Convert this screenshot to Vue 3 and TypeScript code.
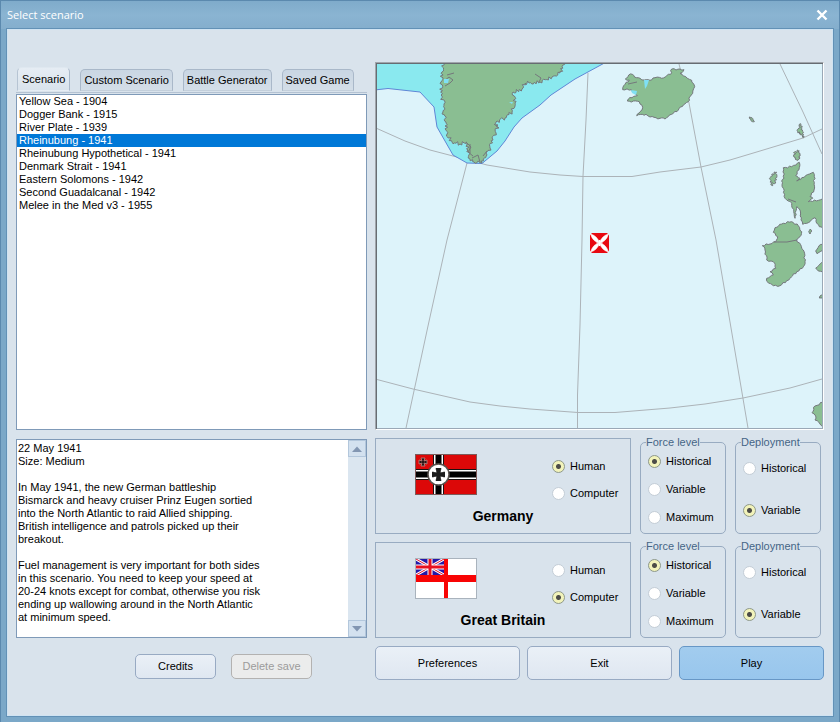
<script setup lang="ts">
import { reactive, ref } from 'vue'

type Point = [number, number]

interface Side {
  id: string
  name: string
  player: string
  force: string
  deployment: string
}

const tabs = ['Scenario', 'Custom Scenario', 'Battle Generator', 'Saved Game']
const activeTab = ref('Scenario')

const scenarios = [
  'Yellow Sea - 1904',
  'Dogger Bank - 1915',
  'River Plate - 1939',
  'Rheinubung - 1941',
  'Rheinubung Hypothetical - 1941',
  'Denmark Strait - 1941',
  'Eastern Solomons - 1942',
  'Second Guadalcanal - 1942',
  'Melee in the Med v3 - 1955',
]
const selected = ref('Rheinubung - 1941')

const briefing = [
  '22 May 1941',
  'Size: Medium',
  '',
  'In May 1941, the new German battleship',
  'Bismarck and heavy cruiser Prinz Eugen sortied',
  'into the North Atlantic to raid Allied shipping.',
  'British intelligence and patrols picked up their',
  'breakout.',
  '',
  'Fuel management is very important for both sides',
  'in this scenario. You need to keep your speed at',
  '20-24 knots except for combat, otherwise you risk',
  'ending up wallowing around in the North Atlantic',
  'at minimum speed.',
].join('\n')

const players = ['Human', 'Computer']
const forceLevels = ['Historical', 'Variable', 'Maximum']
const deployments = ['Historical', 'Variable']

const sides = reactive<Side[]>([
  { id: 'germany', name: 'Germany', player: 'Human', force: 'Historical', deployment: 'Variable' },
  { id: 'britain', name: 'Great Britain', player: 'Computer', force: 'Historical', deployment: 'Variable' },
])

const memo = ref<HTMLTextAreaElement | null>(null)
const scrollMemo = (lines: number) => memo.value?.scrollBy(0, lines * 13)

/* Chart points are kept in thirds of a chart unit, relative to an origin. */
const place = (ox: number, oy: number, pts: Point[]): Point[] =>
  pts.map(([x, y]): Point => [ox + x / 3, oy + y / 3])

/* Breaks every stretch of shore into short steps that swing to either side. */
function coast(pts: Point[], jag: number, step = 2): string {
  const out: string[] = []
  let n = 0
  pts.forEach(([x1, y1], i) => {
    const [x2, y2] = pts[(i + 1) % pts.length]
    const len = Math.hypot(x2 - x1, y2 - y1) || 1
    const parts = Math.max(1, Math.round(len / step))
    for (let k = 0; k < parts; k++) {
      n++
      const swing = k === 0 ? 0 : jag * Math.sin(n * 2.3 + Math.sin(n * 5.1) * 2)
      const x = x1 + ((x2 - x1) * k) / parts - ((y2 - y1) / len) * swing
      const y = y1 + ((y2 - y1) * k) / parts + ((x2 - x1) / len) * swing
      out.push(`${x.toFixed(1)} ${y.toFixed(1)}`)
    }
  })
  return `M${out.join('L')}Z`
}

const greenland = coast(
  [[445, 58], [442, 72], [441, 82], [441, 95], [444, 104], [443, 112], [446, 122], [447, 134], [452, 142], [460, 144],
   [467, 142], [468, 150], [470, 159], [474, 162], [482, 163], [487, 155], [490, 148], [493, 140], [496, 133], [498, 125],
   [496, 122], [505, 118], [512, 112], [515, 103], [513, 92], [522, 89], [525, 83], [540, 82], [552, 77], [560, 73], [566, 62], [566, 58]],
  1.7, 1.4,
)
const iceland = coast(place(600, 55, [
  [97, 58], [110, 68], [120, 70], [133, 75], [150, 76], [165, 68], [185, 70], [200, 62], [212, 58], [215, 42], [228, 45],
  [240, 42], [252, 44], [240, 55], [262, 70], [275, 76], [284, 95], [278, 115], [270, 125], [265, 140], [250, 150],
  [235, 165], [215, 178], [195, 192], [180, 190], [150, 186], [138, 178], [110, 182], [120, 170], [128, 158], [118, 140],
  [82, 138], [85, 132], [112, 122], [94, 104], [68, 104], [75, 88], [88, 75], [76, 72], [86, 60],
]), 0.8)
const scotland = coast(place(600, 55, [
  [550, 338], [575, 335], [598, 322], [598, 338], [587, 362], [600, 370], [590, 378], [640, 352], [643, 365], [642, 405],
  [630, 425], [638, 430], [625, 440], [674, 432], [674, 518], [658, 515], [650, 505], [645, 488], [630, 500], [608, 508],
  [603, 495], [600, 465], [590, 455], [585, 490], [581, 470], [575, 445], [555, 430], [550, 400], [545, 378], [552, 370],
]), 0.7)
const ireland = coast(place(755, 115, [
  [110, 320], [130, 332], [140, 350], [135, 365], [125, 375], [145, 405], [150, 440], [142, 460], [125, 470], [105, 490],
  [75, 512], [55, 512], [37, 500], [35, 490], [55, 480], [45, 470], [62, 460], [55, 440], [35, 435], [30, 405], [22, 392],
  [62, 380], [68, 365], [55, 352], [60, 338], [85, 325],
]), 0.8)
const islets = [
  coast(place(600, 55, [[515, 358], [530, 352], [526, 380], [518, 392], [511, 374]]), 1.2, 1),
  coast(place(600, 55, [[602, 206], [607, 228], [610, 248], [602, 236], [593, 230]]), 1, 1),
  coast(place(600, 55, [[448, 186], [456, 188], [463, 200], [455, 199]]), 0.4, 1),
  coast(place(600, 55, [[584, 290], [598, 288], [597, 312], [585, 312]]), 1.3, 1),
  coast(place(755, 115, [[166, 342], [170, 348], [165, 357], [161, 350]]), 0.2),
  coast(place(755, 115, [[210, 386], [192, 392], [182, 408], [186, 416], [210, 404]]), 0.6),
  coast(place(755, 115, [[210, 440], [196, 446], [182, 460], [190, 468], [210, 474]]), 0.6),
  coast(place(370, 240, [[1364, 162], [1350, 168], [1348, 174], [1364, 174]]), 0.3),
  coast(place(370, 240, [[1364, 484], [1335, 498], [1326, 518], [1337, 528], [1335, 540], [1350, 552], [1364, 562]]), 0.8),
]
</script>

<template>
  <div class="window">
    <header class="titlebar">
      <h1>Select scenario</h1>
      <button class="close" type="button" aria-label="Close">
        <svg viewBox="0 0 12 12" width="12" height="12"><path d="M1.5 1.5 10.5 10.5M10.5 1.5 1.5 10.5" /></svg>
      </button>
    </header>

    <main class="client">
      <section class="browser">
        <nav class="tabs" role="tablist">
          <button
            v-for="t in tabs"
            :key="t"
            type="button"
            role="tab"
            class="tab"
            :class="{ active: t === activeTab }"
            :aria-selected="t === activeTab"
            @click="activeTab = t"
          >{{ t }}</button>
        </nav>
        <select v-model="selected" class="list" size="9" aria-label="Scenarios">
          <option v-for="s in scenarios" :key="s" :value="s">{{ s }}</option>
        </select>
      </section>

      <figure class="map">
        <svg viewBox="377 64 445 364" preserveAspectRatio="xMidYMid slice" role="img" aria-label="North Atlantic chart">
          <rect class="sea" x="300" y="0" width="600" height="500" />
          <g class="graticule">
            <path d="M377 128.500 405 141 430 150 453 156 487 165 530 172 560 175 583 176.500H632L660 172 701 167 730 160 760 151 803 138 822 129" />
            <path d="M377 379.500 413 389 470 402 500 406 530 409 578 412.500H615L670 408 705 404 743 398 790 388 822 379" />
            <path d="M467 163 447 240 428 326 406 428" />
            <path d="M588 73 586 120 583 176 582 240 580 325 577.500 395V428" />
            <path d="M679 64 689 103 701 167 716 240 730 322 748 428" />
            <path d="M780 64 803 112 822 154" />
          </g>
          <path class="ice" d="M370 90.500 388 88.500 420 92 434 107 437 127 453 155 467 163 482 163.500 497 151 505 141 514 127 522 118 540 105 551 95 575 79 610 60H370Z" />
          <g class="land">
            <path :d="greenland" />
            <path :d="iceland" />
            <path :d="scotland" />
            <path :d="ireland" />
            <path v-for="(d, i) in islets" :key="i" :d="d" />
            <path class="inlet" d="M444 81 449 77 453 80 450 83 445 86M447 75 454 73M466 142 471 147 468 152 473 156M470 144V153M472 158 478 155 480 162M483 156 487 151M535 74 541 78 539 82M494 124 499 128M774 242 787 242 797 240M628 84 637 82M788 199 796 202" />
          </g>
          <g class="fjord">
            <path d="M644 80 649 80 647 86 645 89ZM631 90 637 91 636 95 632 93ZM444 79 449 79 448 83 444 83ZM509 102 513 102 512 104Z" />
          </g>
          <g class="marker">
            <path d="M592 233H607L609 235V251L607 253H592L590 251V235Z" />
            <path class="petals" d="M599.500 243Q593 242 590.500 234 597.500 236 599.500 243ZM599.500 243Q606 242 608.500 234 601.500 236 599.500 243ZM599.500 243Q593 244 590.500 252 597.500 250 599.500 243ZM599.500 243Q606 244 608.500 252 601.500 250 599.500 243Z" />
            <path class="hair" d="M599.500 240V246M596.500 243H602.500" />
          </g>
        </svg>
      </figure>

      <section class="briefing">
        <textarea ref="memo" readonly aria-label="Scenario briefing" :value="briefing"></textarea>
        <div class="scrollbar">
          <button type="button" aria-label="Scroll up" @click="scrollMemo(-1)">
            <svg viewBox="0 0 10 6" width="10" height="6"><path d="M0 6 5 0.500 10 6Z" /></svg>
          </button>
          <button type="button" aria-label="Scroll down" @click="scrollMemo(1)">
            <svg viewBox="0 0 10 6" width="10" height="6"><path d="M0 0 5 5.500 10 0Z" /></svg>
          </button>
        </div>
      </section>

      <section class="sides">
        <div v-for="side in sides" :key="side.id" class="side">
          <div class="nation">
            <div class="nation-top">
              <svg v-if="side.id === 'germany'" class="flag" viewBox="0 0 62 41" width="62" height="41" aria-hidden="true">
                <rect width="62" height="41" fill="#dc0808" />
                <path d="M0 20.500H62M23.500 0V41" stroke="#1a1010" stroke-width="11" />
                <path d="M0 20.500H62M23.500 0V41" stroke="#fff" stroke-width="9" />
                <path d="M0 20.500H62M23.500 0V41" stroke="#000" stroke-width="6" />
                <circle cx="23.500" cy="20.500" r="10.500" fill="#fff" stroke="#5a5450" stroke-width="1.500" />
                <path d="M21 14.500H26Q25 17 25 19 27 19 29.500 18V23Q27 22 25 22 25 24 26 26.500H21Q22 24 22 22 20 22 17.500 23V18Q20 19 22 19 22 17 21 14.500Z" fill="#1c1c1c" stroke="#1c1c1c" />
                <path d="M6 4H10L9 7 12 6V10L9 9 10 12H6L7 9 4 10V6L7 7Z" fill="#2a1616" stroke="#b98a84" stroke-width=".8" />
                <rect x=".5" y=".5" width="61" height="40" fill="none" stroke="#7d5a5a" />
              </svg>
              <svg v-else class="flag" viewBox="0 0 62 41" width="62" height="41" aria-hidden="true">
                <rect width="62" height="41" fill="#fff" />
                <rect x="1" y="1" width="28" height="16" fill="#2418a8" />
                <path d="M1 1 29 17M29 1 1 17" stroke="#fff" stroke-width="3" />
                <path d="M1 1 29 17M29 1 1 17" stroke="#e0102a" stroke-width="1" />
                <path d="M15 1V17M1 9H29" stroke="#fff" stroke-width="5" />
                <path d="M15 1V17M1 9H29" stroke="#e81020" stroke-width="3" />
                <path d="M31 0V41" stroke="#f80404" stroke-width="4" />
                <path d="M0 20.500H62" stroke="#f80404" stroke-width="7" />
                <rect x=".5" y=".5" width="61" height="40" fill="none" stroke="#a9b3bd" />
              </svg>
              <div class="players" role="radiogroup" :aria-label="side.name">
                <label v-for="p in players" :key="p">
                  <input v-model="side.player" type="radio" :name="`${side.id}-player`" :value="p" />{{ p }}
                </label>
              </div>
            </div>
            <h2>{{ side.name }}</h2>
          </div>
          <fieldset>
            <legend>Force level</legend>
            <label v-for="f in forceLevels" :key="f">
              <input v-model="side.force" type="radio" :name="`${side.id}-force`" :value="f" />{{ f }}
            </label>
          </fieldset>
          <fieldset>
            <legend>Deployment</legend>
            <label v-for="d in deployments" :key="d">
              <input v-model="side.deployment" type="radio" :name="`${side.id}-deployment`" :value="d" />{{ d }}
            </label>
          </fieldset>
        </div>
      </section>

      <div class="actions minor">
        <button type="button" class="btn">Credits</button>
        <button type="button" class="btn" disabled>Delete save</button>
      </div>
      <div class="actions major">
        <button type="button" class="btn">Preferences</button>
        <button type="button" class="btn">Exit</button>
        <button type="button" class="btn primary">Play</button>
      </div>
    </main>
  </div>
</template>

<style>
body {
  margin: 0;
}
</style>

<style scoped>
* {
  box-sizing: border-box;
}
.window {
  min-height: 100vh;
  display: flex;
  flex-direction: column;
  padding: 0 6px 6px;
  border: 1px solid #5b89ae;
  background: #7ba8c8;
  font: 11px/13px "Liberation Sans", Arial, sans-serif;
  color: #000;
}
button,
select,
textarea {
  font: inherit;
  color: inherit;
}
.titlebar {
  display: flex;
  align-items: center;
  justify-content: space-between;
  height: 28px;
  margin: 0 -6px;
  padding: 0 6px;
  background: linear-gradient(#7fabcb, #8ab4d2 50%, #84aecd);
}
h1 {
  margin: 0;
  font: 11px/16px "Open Sans", "Noto Sans", sans-serif;
  color: #fff;
}
.close {
  display: flex;
  padding: 5px;
  border: 0;
  background: none;
}
.close path {
  stroke: #fff;
  stroke-width: 2.4;
  fill: none;
}
.client {
  flex: 1;
  display: grid;
  grid-template-columns: 351fr 449fr;
  grid-template-rows: 1fr auto auto;
  gap: 8px;
  padding: 32px 8px 35px;
  border: 1px solid #cfe3f2;
  outline: 1px solid #6291b6;
  background: #d9e3ec;
}
.browser {
  display: flex;
  flex-direction: column;
  min-height: 0;
  padding-top: 5px;
}
.tabs {
  display: flex;
  align-items: flex-end;
  gap: 10px;
  height: 26px;
  padding: 0 1px 1px;
  border-bottom: 1px solid #b4c2d2;
}
.tab {
  flex: none;
  height: 22px;
  padding: 0 3px;
  border: 1px solid #a9b8c9;
  border-bottom-color: #c3cfdb;
  border-radius: 5px 5px 0 0;
  background: linear-gradient(#c9d6e3, #d3dee8);
  white-space: nowrap;
}
.tab.active {
  height: 24px;
  padding: 0 4px;
  border-color: #dfe8f0 #a9b8c9 transparent #b6c4d3;
  background: linear-gradient(#e6edf4, #d9e3ec);
}
.list {
  flex: 1;
  margin-top: 1px;
  padding: 0;
  border: 1px solid #7f9ab8;
  border-radius: 0;
  background: #fff;
  outline: 0;
  overflow: hidden;
}
.list option {
  min-height: 13px;
  padding: 0 2px;
  line-height: 13px;
}
.list option:checked {
  background: linear-gradient(#0078d7, #0078d7);
  color: #fff;
}
.map {
  display: flex;
  min-height: 0;
  margin: 0;
  padding: 1px;
  border: 1px solid;
  border-color: #a0a6ac #fff #fff #a0a6ac;
  box-shadow: inset 1px 1px #676c72, inset -1px -1px #9aa8b6;
}
.map svg {
  flex: 1;
  width: 0;
  min-width: 0;
  height: 100%;
}
.sea {
  fill: #ddf3fa;
}
.ice {
  fill: #8ae9ef;
  stroke: #5f86d6;
}
.graticule {
  fill: none;
  stroke: #acb3b8;
}
.land {
  fill: #8abe92;
  stroke: #74787c;
  stroke-width: 1;
}
.land .inlet {
  fill: none;
}
.fjord {
  fill: #7fe0f4;
}
.marker {
  fill: #e80810;
}
.marker .petals {
  fill: #fff;
  stroke: #fff;
  stroke-width: 0.6;
}
.hair {
  stroke: #fff;
  stroke-width: 1;
}
.briefing {
  display: flex;
  margin-top: 1px;
  border: 1px solid #7f9ab8;
  background: #fff;
}
textarea {
  flex: 1;
  min-width: 0;
  padding: 2px 1px;
  border: 0;
  outline: 0;
  resize: none;
  background: none;
  overflow: hidden;
}
.scrollbar {
  display: flex;
  flex-direction: column;
  justify-content: space-between;
  width: 18px;
  background: #dbe6f0;
}
.scrollbar button {
  display: flex;
  align-items: center;
  justify-content: center;
  height: 17px;
  padding: 0;
  border: 1px solid #b3c7dc;
  background: #d3e1ef;
}
.scrollbar path {
  fill: #8296b2;
}
.sides {
  display: grid;
  gap: 8px;
}
.side {
  display: flex;
  gap: 9px;
  min-height: 96px;
  padding-right: 3px;
}
.nation {
  flex: 1;
  padding: 14px 0 0;
  border: 1px solid #98abc1;
}
.nation-top {
  display: flex;
  gap: 75px;
  padding-left: 39px;
}
.flag {
  flex: none;
  margin-top: 1px;
}
h2 {
  margin: 0;
  font-size: 14px;
  line-height: 18px;
  text-align: center;
}
label {
  display: flex;
  align-items: center;
  gap: 5px;
}
.players label {
  height: 27px;
}
input[type='radio'] {
  appearance: none;
  flex: none;
  width: 13px;
  height: 13px;
  margin: 0;
  border: 1px solid #c3cdd6;
  border-radius: 50%;
  background: #fff;
}
input[type='radio']:checked {
  border-color: #8f9988;
  background: radial-gradient(circle, #4c4c48 0 2px, #f2f3ba 3px 5px, #e4e6b0);
}
fieldset {
  display: flex;
  flex-direction: column;
  width: 86px;
  min-width: 0;
  margin: 0;
  padding: 1px 0 2px 7px;
  border: 1px solid #98abc1;
  border-radius: 5px;
}
fieldset label {
  flex: 1;
}
legend {
  margin-left: -2px;
  padding: 0;
  line-height: 8px;
  color: #456586;
}
.actions {
  display: flex;
}
.minor {
  gap: 15px;
  padding: 8px 0 0 119px;
}
.minor .btn {
  width: 81px;
  height: 25px;
}
.major {
  gap: 7px;
}
.major .btn {
  flex: 1;
  height: 34px;
}
.btn {
  padding: 0;
  border: 1px solid #98aac3;
  border-radius: 5px;
  background: linear-gradient(#eaf0f7, #dfe7f1);
}
.btn.primary {
  border-color: #6797c6;
  background: linear-gradient(#a2ccee, #98c6ed);
}
.btn:disabled {
  border-color: #b3b2b1;
  background: #ebecec;
  color: #9b9b9b;
}
</style>
